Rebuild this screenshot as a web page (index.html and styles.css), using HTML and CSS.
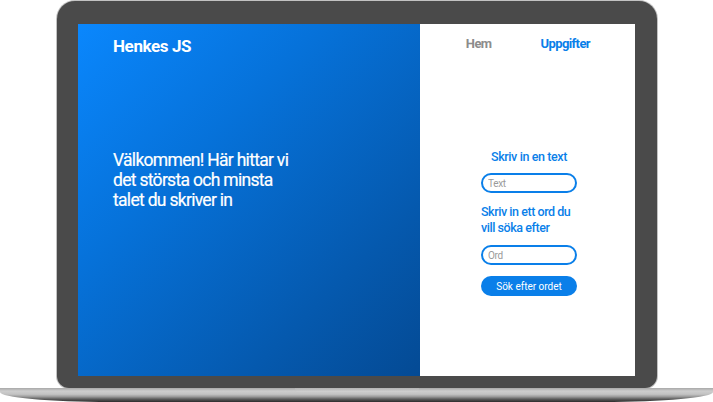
FILE: index.html
```html
<!DOCTYPE html>
<html lang="sv">
<head>
<meta charset="utf-8">
<title>Henkes JS</title>
<link rel="stylesheet" href="styles.css">
</head>
<body>
<div class="device">
  <div class="frame">
    <div class="screen">
      <section class="hero">
        <div class="brand">Henkes JS</div>
        <p class="welcome">Välkommen! Här hittar vi<br>det största och minsta<br>talet du skriver in</p>
      </section>
      <section class="side">
        <nav class="nav">
          <a class="nav-link">Hem</a>
          <a class="nav-link active">Uppgifter</a>
        </nav>
        <form class="form">
          <div class="form-title">Skriv in en text</div>
          <input class="field" type="text" placeholder="Text">
          <div class="form-label">Skriv in ett ord du vill söka efter</div>
          <input class="field field-2" type="text" placeholder="Ord">
          <button class="btn" type="button">Sök efter ordet</button>
        </form>
      </section>
    </div>
  </div>
  <div class="base"><div class="notch"></div></div>
</div>
</body>
</html>
```

FILE: styles.css
```css
* { box-sizing: border-box; }
html, body { margin: 0; padding: 0; background: #ffffff; }
body { font-family: Roboto, "Liberation Sans", sans-serif; width: 713px; height: 402px; overflow: hidden; }

.device { display: flex; flex-direction: column; padding-top: 1px; }

.frame {
  margin-left: 57px;
  width: 600px;
  height: 387px;
  background: #4a4a4a;
  border-radius: 18px 18px 12px 12px;
  padding: 23px 22px 12px 21px;
  box-shadow: 0 0 0 1px #c2c2c2;
}

.screen {
  display: grid;
  grid-template-columns: 342px 215px;
  height: 352px;
  background: #ffffff;
}

.hero {
  background: linear-gradient(135deg, #0a87fd 0%, #0672da 35%, #0559ae 75%, #044a94 100%);
  padding: 12px 20px 0 35px;
  display: flex;
  flex-direction: column;
  color: #ffffff;
}
.brand { font-size: 17px; line-height: 20px; font-weight: 700; letter-spacing: -0.4px; }
.welcome { margin: 94px 0 0; font-size: 17.5px; line-height: 20px; font-weight: 400; letter-spacing: -0.7px; white-space: nowrap; -webkit-text-stroke: 0.2px #ffffff; }

.side { display: flex; flex-direction: column; padding-top: 12px; }
.nav { display: flex; justify-content: flex-end; gap: 49px; padding-right: 45px; }
.nav-link { font-size: 13px; line-height: 16px; font-weight: 700; color: #8c8c8c; letter-spacing: -0.6px; }
.nav-link.active { color: #0a7fe9; }

.form { display: flex; flex-direction: column; width: 96px; margin: 97px 0 0 61px; }
.form-title { font-size: 12.5px; line-height: 16px; font-weight: 500; color: #0a7fe9; text-align: center; letter-spacing: -0.4px; }
.form-label { font-size: 12.5px; line-height: 16px; font-weight: 500; color: #0a7fe9; margin-top: 11px; letter-spacing: -0.45px; width: 100px; }
.field {
  margin-top: 8px;
  height: 20px;
  width: 96px;
  border: 2px solid #0a7fe9;
  border-radius: 10px;
  padding: 0 0 0 5px;
  font-family: Roboto, "Liberation Sans", sans-serif;
  font-size: 10px;
  letter-spacing: -0.3px;
  color: #333;
  background: #fff;
  outline: none;
}
.field::placeholder { color: #9a9a9a; }
.field-2 { margin-top: 9px; }
.btn {
  margin-top: 11px;
  height: 20px;
  width: 96px;
  border: none;
  border-radius: 10px;
  background: #0a7fe9;
  color: #ffffff;
  font-family: Roboto, "Liberation Sans", sans-serif;
  font-size: 10px;
  font-weight: 400;
  padding: 0;
}

.base {
  width: 713px;
  height: 14px;
  display: flex;
  justify-content: center;
  border-radius: 0 0 110px 110px / 0 0 10px 10px;
  background: linear-gradient(to bottom, #a8a8a8 0%, #cdcdcd 22%, #c2c2c2 45%, #9a9a9a 62%, #5a5a5a 80%, #2c2c2c 100%);
}
.notch {
  width: 124px;
  height: 4px;
  border-radius: 0 0 6px 6px;
  background: linear-gradient(to bottom, #b4b4b4, #d2d2d2);
}
```
